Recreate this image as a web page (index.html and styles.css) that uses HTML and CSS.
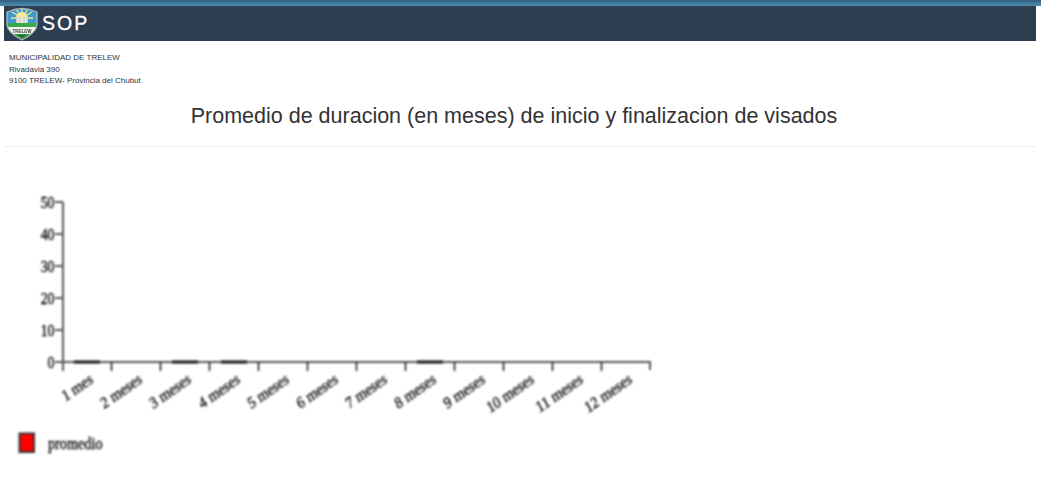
FILE: index.html
```html
<!DOCTYPE html>
<html lang="es">
<head>
<meta charset="utf-8">
<title>SOP</title>
<link rel="stylesheet" href="styles.css">
</head>
<body>
<div class="topline"></div>
<header class="navbar">
  <svg class="logo" width="32" height="34" viewBox="0 0 32 34">
    <defs><clipPath id="shield"><path d="M1 5 Q16 -2 31 5 V18 Q30 26 16 33 Q2 26 1 18 Z"/></clipPath></defs>
    <g clip-path="url(#shield)">
      <rect width="32" height="17" fill="#3d9bd2"/>
      <path d="M16 11 L6 5 M16 11 L10 2 M16 11 L16 1 M16 11 L22 2 M16 11 L26 5 M16 11 L5 11 M16 11 L27 11" stroke="#f2e68a" stroke-width="1.300"/>
      <circle cx="16" cy="11" r="6" fill="#f4ec9c"/>
      <rect x="10" y="10" width="12" height="6" fill="#e9e9df"/>
      <path d="M11 10 V16 M14 10 V16 M18 10 V16 M21 10 V16" stroke="#a9b0a0" stroke-width="0.700"/>
      <rect y="16" width="32" height="4" fill="#3aa84c"/>
      <rect y="20" width="32" height="7" fill="#f5f5f0"/>
      <rect y="27" width="32" height="7" fill="#2e9a45"/>
      <path d="M13 28.500 H19 M16 28.500 V31" stroke="#2c4a34" stroke-width="1"/>
    </g>
    <path d="M1 5 Q16 -2 31 5 V18 Q30 26 16 33 Q2 26 1 18 Z" fill="none" stroke="#aeb9b8" stroke-width="1.300"/>
    <text class="logotext" x="16" y="25.500">TRELEW</text>
  </svg>
  <span class="brand">SOP</span>
</header>
<address class="info">
  <div>MUNICIPALIDAD DE TRELEW</div>
  <div>Rivadavia 390</div>
  <div>9100 TRELEW- Provincia del Chubut</div>
</address>
<h1 class="title">Promedio de duracion (en meses) de inicio y finalizacion de visados</h1>
<hr class="rule">
<figure class="chart">
  <svg class="plot" width="660" height="290" viewBox="0 0 660 290">
    <path class="axis" d="M55 32 H63 M55 64 H63 M55 96 H63 M55 128 H63 M55 160 H63 M55 192 H650 V200 M63 32 V201"/>
    <path class="ticks" d="M111.500 192 V201 M160.500 192 V201 M209.500 192 V201 M258.500 192 V201 M307.500 192 V201 M356.500 192 V201 M405.500 192 V201 M454.500 192 V201 M503.500 192 V201 M552.500 192 V201 M601.500 192 V201"/>
    <path class="bars" d="M74 192 H100 M172 192 H198 M221 192 H247 M417 192 H443"/>
    <g class="ylabels">
      <text transform="translate(54.500 38) scale(.92 1.120)">50</text>
      <text transform="translate(54.500 70) scale(.92 1.120)">40</text>
      <text transform="translate(54.500 102) scale(.92 1.120)">30</text>
      <text transform="translate(54.500 134) scale(.92 1.120)">20</text>
      <text transform="translate(54.500 166) scale(.92 1.120)">10</text>
      <text transform="translate(54.500 198) scale(.92 1.120)">0</text>
    </g>
    <g class="xlabels">
      <text transform="translate(94 212) scale(.95 1.100) rotate(-31)">1 mes</text>
      <text transform="translate(143 212) scale(.95 1.100) rotate(-31)">2 meses</text>
      <text transform="translate(192 212) scale(.95 1.100) rotate(-31)">3 meses</text>
      <text transform="translate(241 212) scale(.95 1.100) rotate(-31)">4 meses</text>
      <text transform="translate(290 212) scale(.95 1.100) rotate(-31)">5 meses</text>
      <text transform="translate(339 212) scale(.95 1.100) rotate(-31)">6 meses</text>
      <text transform="translate(388 212) scale(.95 1.100) rotate(-31)">7 meses</text>
      <text transform="translate(437 212) scale(.95 1.100) rotate(-31)">8 meses</text>
      <text transform="translate(486 212) scale(.95 1.100) rotate(-31)">9 meses</text>
      <text transform="translate(535 212) scale(.95 1.100) rotate(-31)">10 meses</text>
      <text transform="translate(584 212) scale(.95 1.100) rotate(-31)">11 meses</text>
      <text transform="translate(633 212) scale(.95 1.100) rotate(-31)">12 meses</text>
    </g>
    <rect class="swatch" x="19.500" y="263.500" width="14.500" height="18.500"/>
    <text class="legend" transform="translate(48 279) scale(.95 1.120)">promedio</text>
  </svg>
</figure>
</body>
</html>
```
FILE: styles.css
```css
* { box-sizing: border-box; }
html, body { margin: 0; padding: 0; background: #fff; overflow: hidden; }
body { width: 1041px; height: 479px; font-family: "Liberation Sans", Arial, sans-serif; color: #333; }
.topline { height: 6px; background: linear-gradient(#2f5f80, #4f8db0); }
.navbar { display: flex; align-items: center; gap: 4px; height: 35px; margin: 0 5px 0 4px; padding-left: 2px; background: #2c3e50; }
.logo { flex: none; margin-top: 1px; filter: blur(0.4px); }
.logotext { font: 700 4.500px "Liberation Sans", sans-serif; fill: #2b3a2f; text-anchor: middle; }
.brand { color: #fff; font-size: 19.500px; letter-spacing: 2px; line-height: 35px; -webkit-text-stroke: 0.3px #fff; }
.info { padding: 11px 0 0 9px; font-style: normal; font-size: 8px; line-height: 11.500px; color: #2a3540; }
.title { margin: 16px 0 0; padding-right: 13px; text-align: center; font-weight: 400; font-size: 21.500px; line-height: 26px; color: #333; }
.rule { height: 1px; margin: 17px 5px 0 4px; border: 0; background: #eee; }
.chart { margin: 0; padding-top: 23px; }
.plot { display: block; overflow: visible; filter: blur(0.8px); }
.axis { fill: none; stroke: #555; stroke-width: 2; }
.ticks { fill: none; stroke: #111; stroke-width: 1.500; }
.bars { fill: none; stroke: #111; stroke-width: 3; }
.ylabels text { font: 15px "Liberation Serif", serif; fill: #000; stroke: #000; stroke-width: 0.3; text-anchor: end; }
.xlabels text { font: 15px "Liberation Serif", serif; fill: #000; stroke: #000; stroke-width: 0.3; text-anchor: end; }
.legend { font: 15px "Liberation Serif", serif; fill: #000; stroke: #000; stroke-width: 0.3; }
.swatch { fill: #f00; stroke: #333; stroke-width: 2; }
```
